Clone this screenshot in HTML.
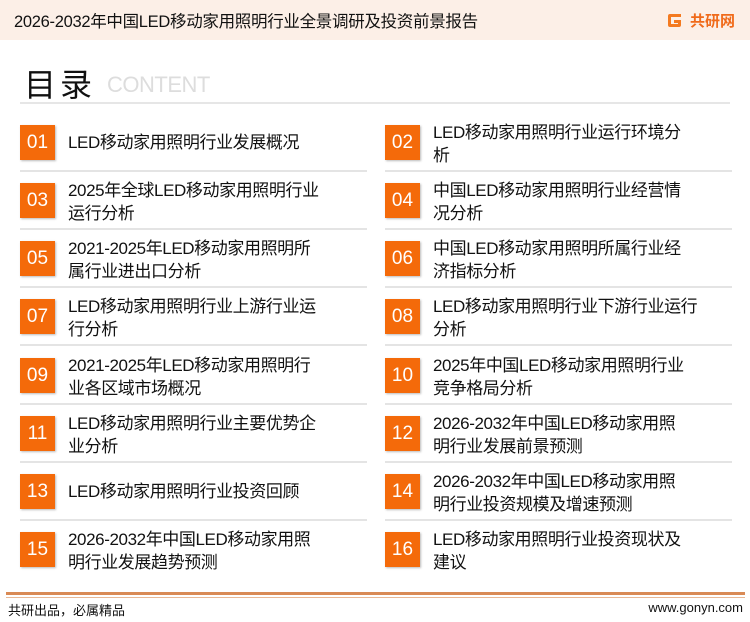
<!DOCTYPE html>
<html><head><meta charset="utf-8"><style>
*{margin:0;padding:0;box-sizing:border-box}
body{width:750px;height:622px;background:#fff;position:relative;overflow:hidden;font-family:"Liberation Sans","Noto Sans CJK SC",sans-serif;color:#111}
.hdr{position:absolute;left:0;top:0;width:750px;height:40px;background:#fcefe7}
.ttl{position:absolute;left:14px;top:8px;font-size:16.5px;color:#111;letter-spacing:-0.3px}
.logo{position:absolute;left:690px;top:10px;font-size:15px;font-weight:bold;color:#f06a1a}
.h1{position:absolute;left:24px;top:60px;font-size:32px;letter-spacing:4px}
.ct{position:absolute;left:107px;top:72px;font-size:22px;color:#ddd;letter-spacing:-0.5px}
.hl{position:absolute;left:20px;top:102px;width:710px;height:2px;background:#e6e6e6}
.it{position:absolute;width:347px;height:58px}
.box{position:absolute;left:0;top:0;width:35px;height:35px;background:#f46a0a;color:#fff;font-size:19px;text-align:center;line-height:35px;box-shadow:1px 1px 2px #bbb}
.tx{position:absolute;left:48px;font-size:17px;line-height:23px;white-space:nowrap;letter-spacing:-0.4px}
.sep{position:absolute;left:0;top:45px;width:347px;height:2px;background:#e4e4e4}
.fl{position:absolute;left:6px;top:592px;width:739px;height:3px;background:#d98a55}
.fl2{position:absolute;left:6px;top:597px;width:739px;height:1px;background:#e8b896}
.ft{position:absolute;top:600px;font-size:13px;color:#111}
</style></head><body>
<div class="hdr"></div>
<div class="ttl">2026-2032年中国LED移动家用照明行业全景调研及投资前景报告</div>
<svg style="position:absolute;left:667px;top:12px" width="16" height="17" viewBox="0 0 16 17"><path d="M14 2H3Q1 2 1 4v9q0 2 2 2h9q2 0 2-2V8H7v3h4v1H4V5h10z" fill="#f47a20"/></svg>
<div class="logo">共研网</div>
<div class="h1">目录</div>
<div class="ct">CONTENT</div>
<div class="hl"></div>

<div class="it" style="left:20px;top:125px"><div class="box">01</div><div class="tx" style="top:6px">LED移动家用照明行业发展概况</div><div class="sep"></div></div>
<div class="it" style="left:385px;top:125px"><div class="box">02</div><div class="tx" style="top:-4px">LED移动家用照明行业运行环境分<br>析</div><div class="sep"></div></div>

<div class="it" style="left:20px;top:183px"><div class="box">03</div><div class="tx" style="top:-4px">2025年全球LED移动家用照明行业<br>运行分析</div><div class="sep"></div></div>
<div class="it" style="left:385px;top:183px"><div class="box">04</div><div class="tx" style="top:-4px">中国LED移动家用照明行业经营情<br>况分析</div><div class="sep"></div></div>

<div class="it" style="left:20px;top:241px"><div class="box">05</div><div class="tx" style="top:-4px">2021-2025年LED移动家用照明所<br>属行业进出口分析</div><div class="sep"></div></div>
<div class="it" style="left:385px;top:241px"><div class="box">06</div><div class="tx" style="top:-4px">中国LED移动家用照明所属行业经<br>济指标分析</div><div class="sep"></div></div>

<div class="it" style="left:20px;top:299px"><div class="box">07</div><div class="tx" style="top:-4px">LED移动家用照明行业上游行业运<br>行分析</div><div class="sep"></div></div>
<div class="it" style="left:385px;top:299px"><div class="box">08</div><div class="tx" style="top:-4px">LED移动家用照明行业下游行业运行<br>分析</div><div class="sep"></div></div>

<div class="it" style="left:20px;top:358px"><div class="box">09</div><div class="tx" style="top:-4px">2021-2025年LED移动家用照明行<br>业各区域市场概况</div><div class="sep"></div></div>
<div class="it" style="left:385px;top:358px"><div class="box">10</div><div class="tx" style="top:-4px">2025年中国LED移动家用照明行业<br>竞争格局分析</div><div class="sep"></div></div>

<div class="it" style="left:20px;top:416px"><div class="box">11</div><div class="tx" style="top:-4px">LED移动家用照明行业主要优势企<br>业分析</div><div class="sep"></div></div>
<div class="it" style="left:385px;top:416px"><div class="box">12</div><div class="tx" style="top:-4px">2026-2032年中国LED移动家用照<br>明行业发展前景预测</div><div class="sep"></div></div>

<div class="it" style="left:20px;top:474px"><div class="box">13</div><div class="tx" style="top:6px">LED移动家用照明行业投资回顾</div><div class="sep"></div></div>
<div class="it" style="left:385px;top:474px"><div class="box">14</div><div class="tx" style="top:-4px">2026-2032年中国LED移动家用照<br>明行业投资规模及增速预测</div><div class="sep"></div></div>

<div class="it" style="left:20px;top:532px"><div class="box">15</div><div class="tx" style="top:-4px">2026-2032年中国LED移动家用照<br>明行业发展趋势预测</div></div>
<div class="it" style="left:385px;top:532px"><div class="box">16</div><div class="tx" style="top:-4px">LED移动家用照明行业投资现状及<br>建议</div></div>

<div class="fl"></div><div class="fl2"></div>
<div class="ft" style="left:8px">共研出品，必属精品</div>
<div class="ft" style="right:7px">www.gonyn.com</div>
</body></html>
